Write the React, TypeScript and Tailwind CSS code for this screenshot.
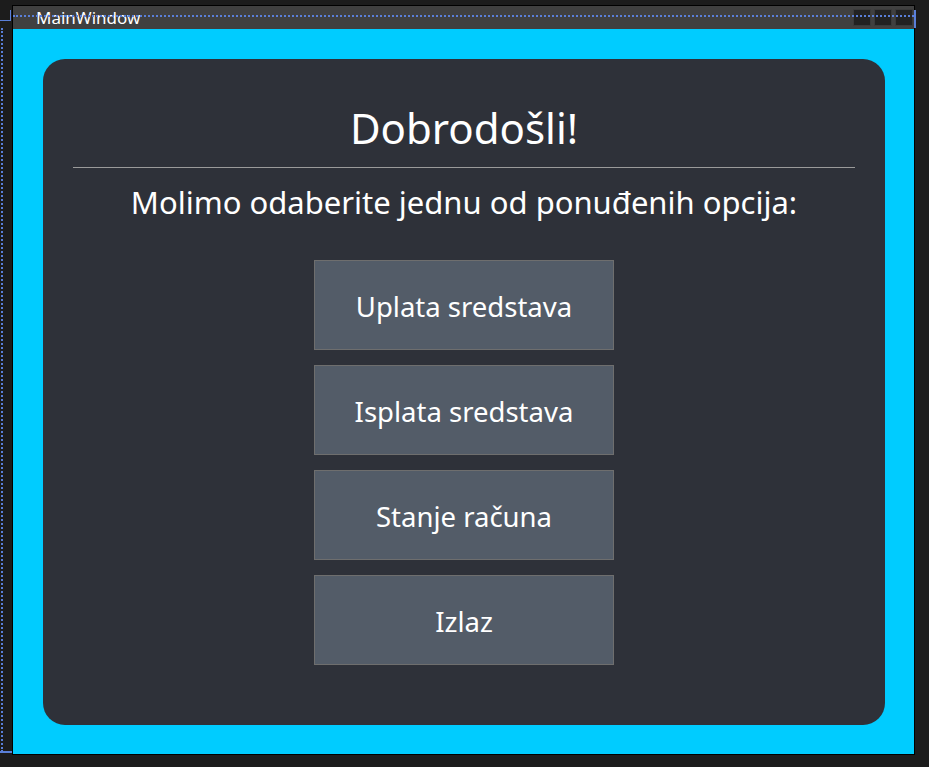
import React from "react";

const options = ["Uplata sredstava", "Isplata sredstava", "Stanje računa", "Izlaz"];

const App = () => {
  return (
    <div className="relative w-[929px] h-[767px] overflow-hidden bg-[#1c1c1c] font-['Noto_Sans',sans-serif]">
      {/* designer guide lines */}
      <div className="absolute left-[1px] top-[28px] h-[724px] border-l-2 border-dotted border-[#5a7fd8]" />
      <div className="absolute left-0 top-[751px] w-[12px] border-t-2 border-[#5a7fd8]" />
      <div className="absolute left-0 top-[20px] w-[11px] border-t border-[#5a7fd8]" />
      <div className="absolute left-[10px] top-[10px] h-[11px] border-l border-[#5a7fd8]" />

      <div className="ml-[12px] pt-[5px]">
        <div className="relative flex flex-col w-[903px] h-[750px] border border-black">
          <div className="relative flex h-[23px] items-center justify-between bg-[#404040] pl-[23px] pr-[1px]">
            <span className="text-[17px] leading-none text-white">MainWindow</span>
            <div className="flex gap-[3px]">
              <div className="w-[18px] h-[17px] bg-[#222222] border border-[#3a3a3a]" />
              <div className="w-[18px] h-[17px] bg-[#222222] border border-[#3a3a3a]" />
              <div className="w-[18px] h-[17px] bg-[#222222] border border-[#3a3a3a]" />
            </div>
            <div className="absolute left-0 right-0 top-[9px] border-t-2 border-dotted border-[#5a7fd8]" />
            <div className="absolute right-[-2px] top-[4px] h-[18px] border-r-2 border-[#5a7fd8]" />
          </div>
          <div className="flex-1 bg-[#00ccff] pt-[30px] pl-[30px] pr-[29px] pb-[29px]">
            <div className="flex h-full flex-col items-center rounded-[22px] bg-[#2e3139] px-[30px] pt-[42px]">
              <h1 className="text-[42px] leading-[54px] text-white">Dobrodošli!</h1>
              <div className="mt-[12px] w-full border-t border-[#9a9a9a]" />
              <p className="mt-[14px] text-[31px] leading-[40px] text-white">
                Molimo odaberite jednu od ponuđenih opcija:
              </p>
              <div className="mt-[38px] flex flex-col gap-[15px]">
                {options.map((o) => (
                  <button
                    key={o}
                    className="flex h-[90px] w-[300px] items-center justify-center border border-[#6e6e6e] bg-[#535c68] pt-[4px] text-[27.5px] text-white"
                  >
                    {o}
                  </button>
                ))}
              </div>
            </div>
          </div>
        </div>
      </div>
    </div>
  );
};

export default App;
